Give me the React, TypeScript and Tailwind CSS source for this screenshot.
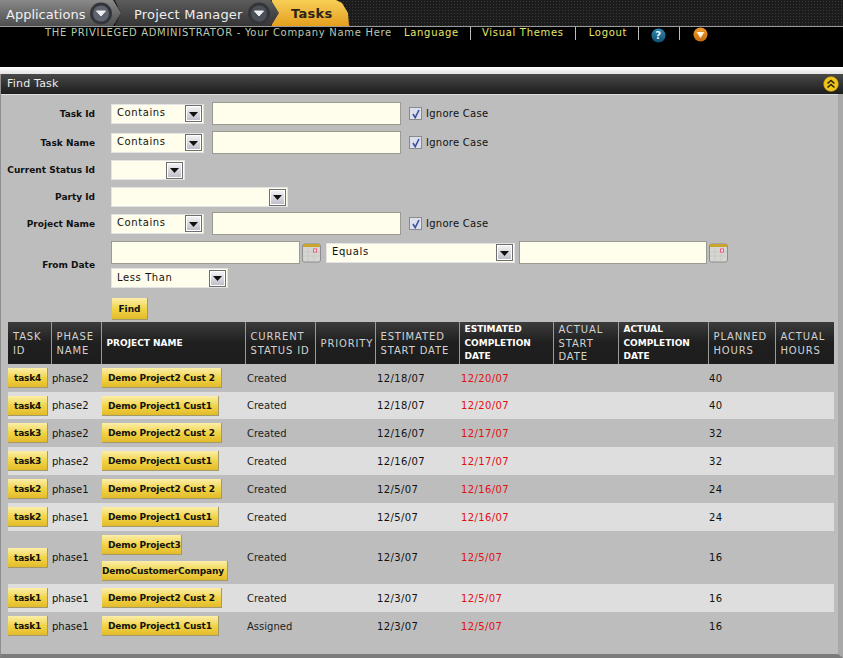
import React from "react";

const font = "font-['DejaVu_Sans',sans-serif]";

function Arrow({ tone }: { tone: string }) {
  return (
    <svg width="28" height="24" viewBox="0 0 28 24" className="shrink-0">
      <circle cx="14" cy="12.5" r="11" fill="#33353a" />
      <circle cx="14" cy="12.5" r="8" fill={tone} />
      <path d="M9.5 10h9l-4.5 5z" fill="#eef0f2" stroke="#eef0f2" strokeLinejoin="round" />
    </svg>
  );
}

function Sel({ w, text }: { w: string; text?: string }) {
  return (
    <div className={`${w} h-[20px] bg-[#fffdeb] border border-[#e4e4e4] flex items-center justify-between pr-[1px] shrink-0`}>
      <span className="pl-[5px] pb-[2px] text-[10px] tracking-[0.6px] text-[#111]">{text}</span>
      <span className="w-[17px] h-[17px] border border-[#6e6e6e] bg-white p-[1px] shrink-0">
        <span className="w-full h-full bg-gradient-to-b from-[#f2f2f2] to-[#c0c0ca] flex items-center justify-center">
          <svg width="9" height="6" viewBox="0 0 9 6"><path d="M0 1h9L4.5 6z" fill="#111" /></svg>
        </span>
      </span>
    </div>
  );
}

function Field({ w }: { w: string }) {
  return <div className={`${w} h-[23px] bg-[#fffdeb] border border-[#9a9a90] shrink-0`} />;
}

function Check() {
  return (
    <span className="flex items-center gap-[4px] ml-[8px]">
      <span className="w-[13px] h-[13px] border border-[#8a8a8a] bg-[#dcdfec] flex items-center justify-center">
        <svg width="10" height="10" viewBox="0 0 10 10"><path d="M2 5l2.2 3.6L8 1" fill="none" stroke="#3c4f9c" strokeWidth="1.6" /></svg>
      </span>
      <span className="pb-[1px] text-[10px] tracking-[0.27px] text-[#111]">Ignore Case</span>
    </span>
  );
}

function Cal() {
  return (
    <svg width="20" height="20" viewBox="0 0 20 20" className="shrink-0 ml-[2px]">
      <rect x="0.5" y="1" width="18" height="18" rx="2" fill="#d6d6d3" stroke="#8e8e8e" />
      <rect x="1" y="1" width="17" height="3" fill="#c9a52e" />
      <path d="M1 9h17M1 13h17M6 5v13M12 5v13" stroke="#c8c8c5" />
      <rect x="11.5" y="6" width="3" height="3" fill="#f3f3f3" stroke="#ee5a7a" />
    </svg>
  );
}

function Label({ text }: { text: string }) {
  return <div className="w-[94px] shrink-0 pt-[2px] text-right font-bold text-[9px] text-[#111] whitespace-nowrap">{text}</div>;
}

function Btn({ text, pad }: { text: string; pad: string }) {
  return (
    <span className={`inline-block h-[20px] leading-[20px] ${pad} font-bold text-[9px] tracking-[-0.15px] text-[#111] whitespace-nowrap bg-gradient-to-b from-[#fbeea6] via-[#f2d547] to-[#e3bb2a] border-b border-r border-[#a39a6c]`}>
      {text}
    </span>
  );
}

const cols = [43, 50, 144, 70, 60, 84, 94, 65, 90, 67, 59];

const headers: [string, boolean][] = [
  ["TASK ID", false],
  ["PHASE NAME", false],
  ["PROJECT NAME", true],
  ["CURRENT STATUS ID", false],
  ["PRIORITY", false],
  ["ESTIMATED START DATE", false],
  ["ESTIMATED COMPLETION DATE", true],
  ["ACTUAL START DATE", false],
  ["ACTUAL COMPLETION DATE", true],
  ["PLANNED HOURS", false],
  ["ACTUAL HOURS", false],
];

const rows = [
  { t: "task4", ph: "phase2", p: "Demo Project2 Cust 2", s: "Created", d: "12/18/07", e: "12/20/07", h: "40", H: "h-[28px]" },
  { t: "task4", ph: "phase2", p: "Demo Project1 Cust1", s: "Created", d: "12/18/07", e: "12/20/07", h: "40", H: "h-[27px]" },
  { t: "task3", ph: "phase2", p: "Demo Project2 Cust 2", s: "Created", d: "12/16/07", e: "12/17/07", h: "32", H: "h-[28px]" },
  { t: "task3", ph: "phase2", p: "Demo Project1 Cust1", s: "Created", d: "12/16/07", e: "12/17/07", h: "32", H: "h-[28px]" },
  { t: "task2", ph: "phase1", p: "Demo Project2 Cust 2", s: "Created", d: "12/5/07", e: "12/16/07", h: "24", H: "h-[28px]" },
  { t: "task2", ph: "phase1", p: "Demo Project1 Cust1", s: "Created", d: "12/5/07", e: "12/16/07", h: "24", H: "h-[28px]" },
  { t: "task1", ph: "phase1", p: "", s: "Created", d: "12/3/07", e: "12/5/07", h: "16", H: "h-[53px]" },
  { t: "task1", ph: "phase1", p: "Demo Project2 Cust 2", s: "Created", d: "12/3/07", e: "12/5/07", h: "16", H: "h-[28px]" },
  { t: "task1", ph: "phase1", p: "Demo Project1 Cust1", s: "Assigned", d: "12/3/07", e: "12/5/07", h: "16", H: "h-[28px]" },
];

export default function App() {
  return (
    <div className={`${font} w-[843px] h-[658px] overflow-hidden bg-[#eeeeee] flex flex-col`}>
      {/* top bar */}
      <div className="h-[27px] shrink-0 flex bg-[#1c1c1c] bg-[radial-gradient(#3a3a3a_1px,transparent_1px)] bg-[length:3px_3px] border-b border-[#9a9a9a]">
        <div className="w-[121px] h-[26px] -mr-[6px] z-20 flex items-center pl-[6px] gap-[2px] bg-gradient-to-b from-[#8a8a8a] to-[#4e4e4e] [clip-path:polygon(0_0,113px_0,121px_13px,113px_26px,0_26px)]">
          <span className="mt-[3px] text-[13px] text-[#f0f0f0] whitespace-nowrap">Applications</span>
          <Arrow tone="#5f6470" />
        </div>
        <div className="w-[164px] h-[26px] -mr-[7px] z-10 flex items-center pl-[19px] gap-[2px] bg-gradient-to-b from-[#5c5c5c] to-[#353535] [clip-path:polygon(0_0,156px_0,164px_13px,156px_26px,0_26px,6px_13px)]">
          <span className="mt-[3px] text-[13px] tracking-[0.2px] text-[#eeeeee] whitespace-nowrap">Project Manager</span>
          <Arrow tone="#4c5058" />
        </div>
        <div className="w-[77px] h-[26px] flex items-center pl-[19px] bg-gradient-to-b from-[#f8cf56] to-[#e39f1b] [clip-path:polygon(0_0,64px_0,70px_3px,76px_13px,77px_26px,0_26px)]">
          <span className="mt-[2px] font-bold text-[13px] tracking-[0.3px] text-[#2c2416]">Tasks</span>
        </div>
      </div>

      {/* user strip */}
      <div className="h-[40px] shrink-0 bg-black flex items-start pl-[45px] text-[10px] tracking-[0.7px]">
        <span className="text-[#b9c9b0] mr-[12px] leading-[12px] whitespace-nowrap">THE PRIVILEGED ADMINISTRATOR - Your Company Name Here</span>
        <span className="text-[#e6e66a] pr-[11px] border-r border-[#bbb] h-[13px] leading-[12px]">Language</span>
        <span className="text-[#e6e66a] pl-[11px] pr-[11px] border-r border-[#bbb] h-[13px] leading-[12px]">Visual Themes</span>
        <span className="text-[#e6e66a] pl-[13px] pr-[11px] border-r border-[#bbb] h-[13px] leading-[12px]">Logout</span>
        <span className="w-[41px] h-[13px] border-r border-[#bbb] flex justify-center">
          <svg width="15" height="15" viewBox="0 0 16 16" className="shrink-0 mt-[1px] ml-[-2px]">
            <defs>
              <linearGradient id="help" x1="0" y1="0" x2="0" y2="1">
                <stop offset="0" stopColor="#2c89b5" />
                <stop offset="1" stopColor="#14506f" />
              </linearGradient>
            </defs>
            <circle cx="8" cy="8" r="7.5" fill="url(#help)" />
            <text x="8" y="12" textAnchor="middle" fontSize="11" fontWeight="700" fill="#e8f2f8" fontFamily="DejaVu Sans">?</text>
          </svg>
        </span>
        <span className="w-[40px] pl-[13px]">
          <svg width="15" height="15" viewBox="0 0 15 15">
            <defs>
              <linearGradient id="menuDot" x1="0" y1="0" x2="0" y2="1">
                <stop offset="0" stopColor="#f09a2a" />
                <stop offset="1" stopColor="#c96d10" />
              </linearGradient>
            </defs>
            <circle cx="7.5" cy="7.5" r="7" fill="url(#menuDot)" />
            <path d="M3.5 5h8l-4 6z" fill="#fff4dc" />
          </svg>
        </span>
      </div>

      <div className="h-[7px] shrink-0 bg-gradient-to-b from-white to-[#e4e4e4]" />

      {/* panel */}
      <div className="flex-1 flex flex-col border-l border-[#8f8f8f] border-r-[5px] border-r-[#a8a8a8] border-b-[4px] border-b-[#7c7c7c] min-h-0">
        <div className="h-[20px] shrink-0 bg-gradient-to-b from-[#4a4a4a] to-[#1d1d1d] flex items-center justify-between pl-[6px] pr-[1px] -mr-[5px]">
          <span className="text-[11px] tracking-[0.2px] text-[#ececec]">Find Task</span>
          <svg width="16" height="16" viewBox="0 0 16 16" className="mr-[3px]">
            <circle cx="8" cy="8" r="7.5" fill="#f0c51e" stroke="#8c7612" strokeWidth="0.5" />
            <path d="M4.5 7.5L8 4.5l3.5 3M4.5 11.5L8 8.5l3.5 3" fill="none" stroke="#2a2408" strokeWidth="1.6" />
          </svg>
        </div>
        <div className="flex-1 bg-[#bdbdbd] border-t border-[#dcdcdc] pt-[7px] min-h-0">
          {/* form */}
          <div className="flex flex-col h-[220px] pr-[5px]">
            <div className="flex items-center h-[23px]">
              <Label text="Task Id" />
              <div className="ml-[16px]"><Sel w="w-[93px]" text="Contains" /></div>
              <div className="ml-[8px]"><Field w="w-[189px]" /></div>
              <Check />
            </div>
            <div className="flex items-center h-[23px] mt-[6px]">
              <Label text="Task Name" />
              <div className="ml-[16px]"><Sel w="w-[93px]" text="Contains" /></div>
              <div className="ml-[8px]"><Field w="w-[189px]" /></div>
              <Check />
            </div>
            <div className="flex items-center h-[20px] mt-[6px]">
              <Label text="Current Status Id" />
              <div className="ml-[16px]"><Sel w="w-[74px]" /></div>
            </div>
            <div className="flex items-center h-[20px] mt-[7px]">
              <Label text="Party Id" />
              <div className="ml-[16px]"><Sel w="w-[177px]" /></div>
            </div>
            <div className="flex items-center h-[23px] mt-[5px]">
              <Label text="Project Name" />
              <div className="ml-[16px]"><Sel w="w-[93px]" text="Contains" /></div>
              <div className="ml-[8px]"><Field w="w-[189px]" /></div>
              <Check />
            </div>
            <div className="flex items-center mt-[6px]">
              <Label text="From Date" />
              <div className="ml-[16px] flex flex-col gap-[4px]">
                <div className="flex items-center">
                  <Field w="w-[189px]" />
                  <Cal />
                  <div className="ml-[4px]"><Sel w="w-[189px]" text="Equals" /></div>
                  <div className="ml-[4px]"><Field w="w-[188px]" /></div>
                  <Cal />
                </div>
                <Sel w="w-[117px]" text="Less Than" />
              </div>
            </div>
            <div className="pl-[111px] mt-[7px]">
              <span className="inline-block w-[36px] h-[22px] leading-[22px] text-center font-bold text-[9px] text-[#111] bg-gradient-to-b from-[#fbeea6] via-[#f2d547] to-[#e3bb2a] border-b border-r border-[#a39a6c]">Find</span>
            </div>
          </div>

          {/* table */}
          <table className="ml-[7px] table-fixed border-collapse w-[826px] text-[10px]">
            <colgroup>
              {cols.map((c, i) => <col key={i} style={{ width: c }} />)}
            </colgroup>
            <thead>
              <tr className="h-[42px] bg-gradient-to-b from-[#3c3c3c] via-[#1f1f1f] to-[#1d1d1d]">
                {headers.map(([h, b], i) => (
                  <th key={i} className={`px-[5px] pt-[1px] text-left align-middle leading-[13.6px] ${i < 10 ? "border-r border-[#9a9a9a]" : ""} ${b ? "font-bold text-[9px] text-white" : "font-normal text-[#d2d2d2] tracking-[0.85px]"} ${i === 4 ? "pr-0" : ""}`}>{h}</th>
                ))}
              </tr>
            </thead>
            <tbody>
              {rows.map((r, i) => (
                <tr key={i} className={`${r.H} ${i % 2 === 1 && i !== 6 ? "bg-[#dedede]" : ""} ${i === 7 ? "bg-[#dedede]" : ""}`}>
                  <td className="p-0"><Btn text={r.t} pad="px-[6px]" /></td>
                  <td className="p-0 pl-[1px] text-[#111]">{r.ph}</td>
                  <td className="p-0 pl-[1px]">
                    {r.p ? (
                      <Btn text={r.p} pad="px-[6px]" />
                    ) : (
                      <div className="flex flex-col items-start gap-[6px] py-[1px]">
                        <Btn text="Demo Project3" pad="pl-[6px]" />
                        <Btn text="DemoCustomerCompany" pad="pr-[3px]" />
                      </div>
                    )}
                  </td>
                  <td className="p-0 pl-[2px] text-[#222]">{r.s}</td>
                  <td />
                  <td className="p-0 pl-[2px] tracking-[0.4px] text-[#111]">{r.d}</td>
                  <td className="p-0 pl-[2px] tracking-[0.4px] text-[#e01010]">{r.e}</td>
                  <td />
                  <td />
                  <td className="p-0 pl-[1px] tracking-[0.4px] text-[#111]">{r.h}</td>
                  <td />
                </tr>
              ))}
            </tbody>
          </table>
        </div>
      </div>
    </div>
  );
}
